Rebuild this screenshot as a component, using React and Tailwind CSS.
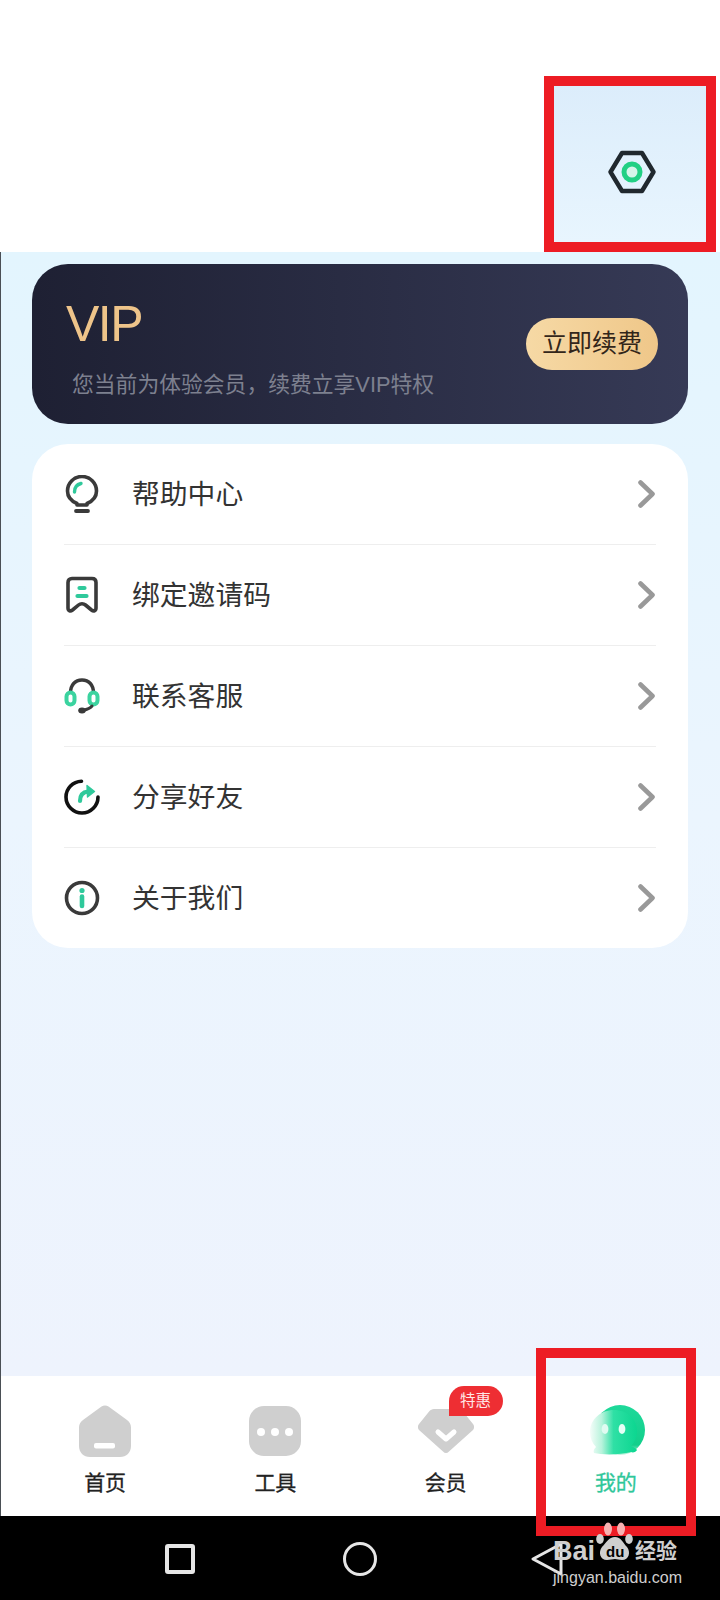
import React from 'react';

const GREEN = '#2fc99b';
const DARK = '#3a3a3a';

const BulbIcon = () => (
  <svg width="36" height="38" viewBox="0 0 36 38" fill="none">
    <path d="M13 30V28.5C7 26 3.5 21.5 3.5 16A14.5 14.5 0 0 1 32.5 16C32.5 21.5 29 26 23 28.5V30Z" stroke={DARK} strokeWidth="3.6" strokeLinejoin="round" />
    <path d="M12 36H24" stroke={DARK} strokeWidth="3.8" strokeLinecap="round" />
    <path d="M10.5 17C10.5 12.5 13 9.5 17 8.5" stroke={GREEN} strokeWidth="3.4" strokeLinecap="round" />
  </svg>
);

const BookmarkIcon = () => (
  <svg width="36" height="38" viewBox="0 0 36 38" fill="none">
    <path d="M8 2.5H28C30.5 2.5 32 4 32 6.5V32C32 35 29.5 35.5 27.5 34L21.5 29C19.5 27.3 16.5 27.3 14.5 29L8.5 34C6.5 35.5 4 35 4 32V6.5C4 4 5.5 2.5 8 2.5Z" stroke={DARK} strokeWidth="3.6" strokeLinejoin="round" />
    <path d="M15.5 12H20.5" stroke={GREEN} strokeWidth="4.2" strokeLinecap="round" />
    <path d="M13.5 20H22.5" stroke={GREEN} strokeWidth="4.2" strokeLinecap="round" />
  </svg>
);

const HeadsetIcon = () => (
  <svg width="36" height="36" viewBox="0 0 36 36" fill="none">
    <path d="M6.5 15C6.5 7 11 2 18 2C25 2 29.5 7 29.5 15" stroke={DARK} strokeWidth="3.4" />
    <rect x="2.5" y="14.5" width="8" height="12" rx="4" fill="#fff" stroke="#3bd39f" strokeWidth="4" />
    <rect x="25.5" y="14.5" width="8" height="12" rx="4" fill="#fff" stroke="#3bd39f" strokeWidth="4" />
    <path d="M28 28C26.5 30 23 31.5 19 32.5" stroke={DARK} strokeWidth="3" strokeLinecap="round" />
    <ellipse cx="18" cy="32.5" rx="3.8" ry="3" fill={DARK} />
  </svg>
);

const ShareIcon = () => (
  <svg width="36" height="36" viewBox="0 0 36 36" fill="none">
    <path d="M17.5 2.2C8.8 2.5 2 9.4 2 18C2 26.8 9.2 34 18 34C26.8 34 34 26.8 34 18" stroke="#111" strokeWidth="3.6" strokeLinecap="round" />
    <path d="M16 22C16 16 19 13 24 12.5" stroke={GREEN} strokeWidth="4.2" strokeLinecap="round" />
    <path d="M23 6.5L30.5 12.5L23.5 18Z" fill={GREEN} stroke={GREEN} strokeWidth="1.4" strokeLinejoin="round" />
  </svg>
);

const InfoIcon = () => (
  <svg width="36" height="36" viewBox="0 0 36 36" fill="none">
    <circle cx="18" cy="18" r="15.5" stroke={DARK} strokeWidth="3.6" />
    <circle cx="18" cy="10.5" r="2.6" fill={GREEN} />
    <path d="M18 16.5V26" stroke={GREEN} strokeWidth="4.6" strokeLinecap="round" />
  </svg>
);

const Chevron = () => (
  <svg width="18" height="28" viewBox="0 0 18 28" fill="none">
    <path d="M2.5 2.5L14.5 14L2.5 25.5" stroke="#999" strokeWidth="4.6" strokeLinecap="round" strokeLinejoin="round" />
  </svg>
);

const HexIcon = () => (
  <svg width="48" height="44" viewBox="0 0 48 44" fill="none">
    <path d="M14 3H34L45.5 22L34 41H14L2.5 22Z" stroke="#20282e" strokeWidth="4.4" strokeLinejoin="round" />
    <circle cx="24" cy="22" r="8" fill="#d6f5ea" stroke="#22d084" strokeWidth="5" />
  </svg>
);

const HomeTab = () => (
  <svg width="52" height="52" viewBox="0 0 52 52">
    <path d="M22.5 1.5C24.5 0 27.5 0 29.5 1.5L48 15C50.5 17 52 19 52 22.5V41C52 47.5 47.5 52 41 52H11C4.5 52 0 47.5 0 41V22.5C0 19 1.5 17 4 15Z" fill="#cfcfcf" />
    <rect x="15" y="38" width="21" height="5.5" rx="2" fill="#fff" />
  </svg>
);

const ToolsTab = () => (
  <svg width="52" height="50" viewBox="0 0 52 50">
    <rect x="0" y="0" width="52" height="50" rx="15" fill="#cfcfcf" />
    <circle cx="12" cy="26" r="4" fill="#fff" />
    <circle cx="26" cy="26" r="4" fill="#fff" />
    <circle cx="40" cy="26" r="4" fill="#fff" />
  </svg>
);

const VipTab = () => (
  <svg width="56" height="44" viewBox="0 0 56 44">
    <path d="M16 0H40C42 0 43.5 1 44.5 2L55 15C56.5 17 56.5 19 55 21L31 42.5C29 44.5 27 44.5 25 42.5L1 21C-0.5 19 -0.5 17 1 15L11.5 2C12.5 1 14 0 16 0Z" fill="#cfcfcf" />
    <path d="M20 23L28 30L36 23" stroke="#fff" strokeWidth="5" strokeLinecap="round" strokeLinejoin="round" fill="none" />
  </svg>
);

const MineTab = () => (
  <svg className="ml-[4px]" width="56" height="52" viewBox="0 0 56 52">
    <defs>
      <linearGradient id="mineFront" x1="0" y1="0" x2="1" y2="0">
        <stop offset="0" stopColor="#f4fdf9" />
        <stop offset="0.25" stopColor="#b8f3dc" />
        <stop offset="0.5" stopColor="#2fe0a5" />
        <stop offset="1" stopColor="#0cd690" />
      </linearGradient>
      <linearGradient id="mineBack" x1="0" y1="0" x2="0" y2="1">
        <stop offset="0" stopColor="#1ed99a" />
        <stop offset="0.8" stopColor="#12cf8b" />
        <stop offset="1" stopColor="#c9f5e3" />
      </linearGradient>
    </defs>
    <circle cx="30" cy="25" r="25" fill="url(#mineBack)" />
    <path d="M24 5C37 5 47 14 47 26C47 33 44 38 41 41C43 42 46 43 47 45C46 47 43 48 41 47C30 50 12 50 4 48C3 46 4 44 6 42C2 38 0 33 0 27C0 14 11 5 24 5Z" fill="url(#mineFront)" />
    <ellipse cx="15" cy="24" rx="3.4" ry="5" fill="#e0fbf1" />
    <ellipse cx="32" cy="24" rx="3.4" ry="5" fill="#e6fff6" />
  </svg>
);

const rows = [
  { label: '帮助中心', icon: <BulbIcon /> },
  { label: '绑定邀请码', icon: <BookmarkIcon /> },
  { label: '联系客服', icon: <HeadsetIcon /> },
  { label: '分享好友', icon: <ShareIcon /> },
  { label: '关于我们', icon: <InfoIcon /> },
];

const tabs = [
  { label: '首页', icon: <HomeTab /> },
  { label: '工具', icon: <ToolsTab /> },
  { label: '会员', icon: <VipTab />, badge: '特惠' },
  { label: '我的', icon: <MineTab />, active: true },
];

const App = () => {
  return (
    <div className="relative w-[720px] h-[1600px] flex flex-col overflow-hidden bg-white font-['Liberation_Sans','Noto_Sans_CJK_SC',sans-serif]">
      <div className="h-[252px] flex justify-end items-start pt-[76px] pr-[4px]">
        <div className="w-[172px] h-[176px] border-[10px] border-[#ed1c24] bg-gradient-to-b from-[#dcedfb] to-[#e8f5fe] flex items-center justify-center pt-[16px] pl-[4px]">
          <HexIcon />
        </div>
      </div>

      <main className="flex-1 border-l border-[#4a4f55] bg-gradient-to-b from-[#e3f5fe] via-[#ebf5fe] to-[#eef3fd] pl-[31px] pr-[32px] pt-[12px]">
        <section className="h-[160px] rounded-[36px] bg-gradient-to-r from-[#1e2033] to-[#363a56] pl-[34px] pr-[30px] flex items-center justify-between">
          <div className="flex flex-col pt-[4px]">
            <div className="mt-[4px] text-[50px] leading-[56px] text-[#eec48a] tracking-[-1.5px]">VIP</div>
            <div className="mt-[18px] ml-[6px] text-[21.8px] leading-[30px] text-[#7d808f]">您当前为体验会员，续费立享VIP特权</div>
          </div>
          <button className="w-[132px] h-[52px] rounded-full bg-gradient-to-r from-[#f6d9a5] to-[#efc789] text-[25px] text-[#33261a] flex items-center justify-center">
            立即续费
          </button>
        </section>

        <section className="mt-[20px] rounded-[36px] bg-white px-[32px]">
          {rows.map((row, i) => (
            <div key={row.label} className={i < rows.length - 1 ? 'h-[101px] flex items-center border-b border-[#eeeeee]' : 'h-[100px] flex items-center'}>
              <div className="w-[36px] flex justify-center">{row.icon}</div>
              <div className="ml-[32px] pt-[2px] flex-1 text-[27.8px] text-[#333333]">{row.label}</div>
              <Chevron />
            </div>
          ))}
        </section>
      </main>

      <nav className="h-[140px] border-l border-[#4a4f55] bg-white grid grid-cols-4 pl-[19px] pr-[19px]">
        {tabs.map((tab) => (
          <div key={tab.label} className="relative flex flex-col items-center">
            <div className="h-[52px] mt-[29px] flex items-center justify-center">{tab.icon}</div>
            <div className={tab.active ? 'mt-[11px] text-[21px] leading-[30px] [-webkit-text-stroke:0.3px_#2fc79a] text-[#2fc79a]' : 'mt-[11px] text-[21px] leading-[30px] [-webkit-text-stroke:0.3px_#222222] text-[#222222]'}>
              {tab.label}
            </div>
            {tab.badge && (
              <span className="absolute left-[88px] top-[10px] w-[54px] h-[30px] rounded-t-[15px] rounded-br-[15px] bg-[#ee2e33] text-[#ffe6e6] text-[15.5px] flex items-center justify-center">
                {tab.badge}
              </span>
            )}
          </div>
        ))}
      </nav>

      <div className="h-[84px] bg-black flex items-center pl-[165px] pt-[1px]">
        <div className="w-[30px] h-[30px] rounded-[3px] border-[4px] border-[#e6e6e6]" />
        <div className="ml-[148px] w-[34px] h-[34px] rounded-full border-[3px] border-[#e6e6e6]" />
        <svg className="ml-[153px]" width="36" height="36" viewBox="0 0 36 36" fill="none">
          <path d="M31 3L3 18L31 33Z" stroke="#e6e6e6" strokeWidth="3" strokeLinejoin="round" />
        </svg>
      </div>

      {/* annotation box round the active tab */}
      <div className="absolute left-[536px] top-[1348px] w-[160px] h-[188px] border-[10px] border-[#ed1c24]" />

      {/* baidu watermark */}
      <div className="absolute left-[552px] top-[1522px] w-[132px] h-[68px] text-[#cfcfcf]">
        <svg className="absolute left-[44px] top-0" width="38" height="40" viewBox="0 0 38 40">
          <ellipse cx="12" cy="7" rx="4" ry="6.5" fill="#f6b2b2" />
          <ellipse cx="25" cy="7" rx="4" ry="6.5" fill="#f6b2b2" />
          <ellipse cx="4" cy="17" rx="3.8" ry="5" fill="#cfcfcf" />
          <ellipse cx="33" cy="17" rx="3.8" ry="5" fill="#cfcfcf" />
          <path d="M19 15C25 15 27 21 31 25C35 30 33 38 26 38C23 38 21 37 19 37C17 37 14 38 11 38C4 38 2 30 6 25C10 21 13 15 19 15Z" fill="#cfcfcf" />
        </svg>
        <span className="absolute left-[1px] top-[14px] text-[27px] leading-[30px] font-bold">Bai</span>
        <span className="absolute left-[54px] top-[21px] text-[15px] leading-[18px] font-bold text-black">du</span>
        <span className="absolute left-[83px] top-[16px] text-[21px] leading-[26px] font-bold">经验</span>
        <span className="absolute left-[1px] top-[46px] text-[16px] leading-[20px] whitespace-nowrap">jingyan.baidu.com</span>
      </div>
    </div>
  );
};

export default App;
